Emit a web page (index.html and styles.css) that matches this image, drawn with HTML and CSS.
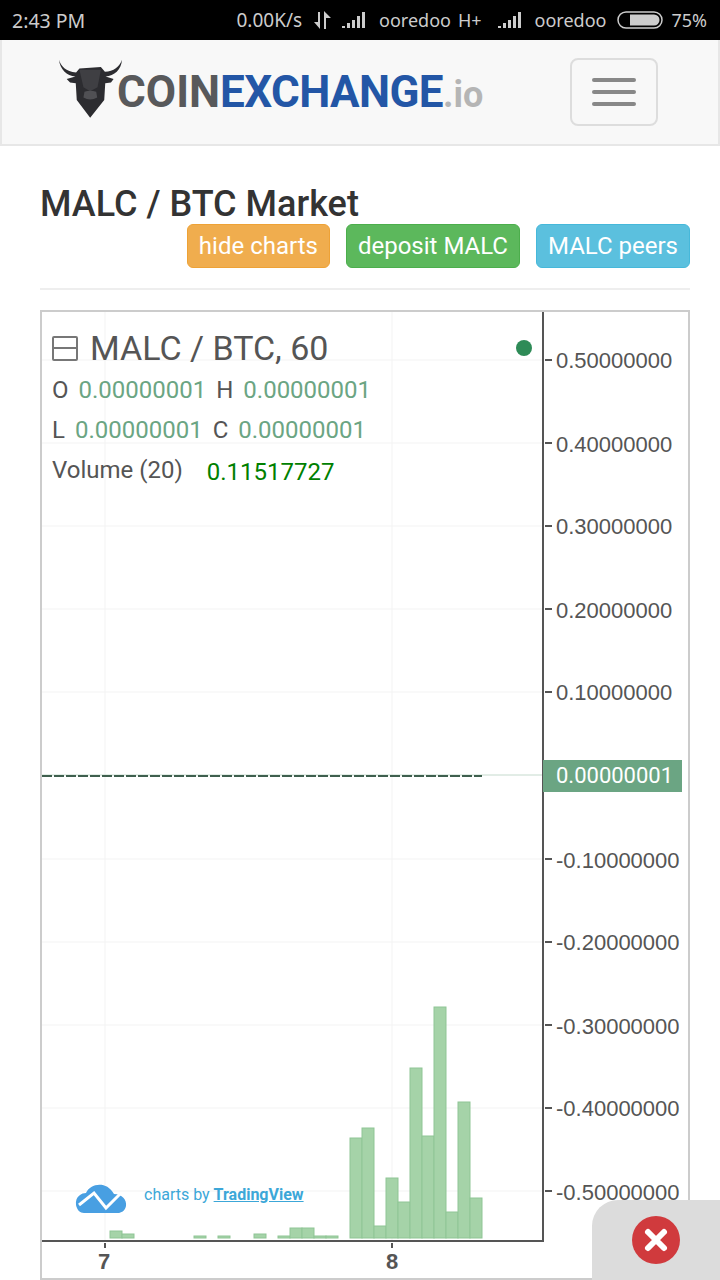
FILE: index.html
```html
<!DOCTYPE html>
<html lang="en">
<head>
    <meta charset="UTF-8">
    <title>MALC / BTC Market</title>
    <link rel="stylesheet" href="styles.css">
</head>
<body>

<div class="statusbar">
    <span class="clock">2:43 PM</span>
    <div class="status-right">
        <span class="speed">0.00K/s</span>
        <svg class="arrows" width="18" height="18" viewBox="0 0 18 18">
            <path d="M5 1H7V18L1 11H5ZM11 18V0L18 7H13V18Z" fill="#ccc"/>
        </svg>
        <svg class="signal" width="26" height="18" viewBox="0 0 26 18">
            <path d="M1 15h3v2H1zM6 12h3v5H6zM11 9h3v8h-3zM16 5h3v12h-3zM21 1h3v16h-3z" fill="#ccc"/>
        </svg>
        <span class="carrier">ooredoo</span>
        <span class="net">H+</span>
        <svg class="signal" width="26" height="18" viewBox="0 0 26 18">
            <path d="M1 15h3v2H1zM6 12h3v5H6zM11 9h3v8h-3zM16 5h3v12h-3zM21 1h3v16h-3z" fill="#ccc"/>
        </svg>
        <span class="carrier">ooredoo</span>
        <svg class="battery" width="46" height="18" viewBox="0 0 46 18">
            <rect x="1" y="1" width="44" height="16" rx="8" fill="none" stroke="#ccc" stroke-width="1.500"/>
            <path d="M13 3.500H37A5.500 5.500 0 0 1 37 14.500H13Z" fill="#ccc"/>
        </svg>
        <span class="percent">75%</span>
    </div>
</div>

<nav class="navbar">
    <a class="brand">
        <svg class="bull" width="66" height="61" viewBox="55 25 195 182">
            <path d="M57 30C62 48 78 66 108 68L118 56L182 52L194 66C220 66 238 50 245 30C243 60 222 78 196 80L220 88L212 98L195 100L192 150L150 203L110 150L107 100L90 98L80 88L106 80C80 78 60 58 57 30Z" fill="#2c2c30"/>
            <path d="M118 60H182L172 112L150 124L130 112Z" fill="#3f3f43"/>
            <path d="M133 126Q150 120 168 126L171 143Q150 154 130 143Z" fill="#505054"/>
        </svg>
        <span class="wordmark"><span class="coin">COIN</span><span class="exchange">EXCHANGE</span><span class="tld">.io</span></span>
    </a>
    <button class="toggle">
        <span class="toggle-bar"></span>
        <span class="toggle-bar"></span>
        <span class="toggle-bar"></span>
    </button>
</nav>

<main class="content">
    <h1>MALC / BTC Market</h1>
    <div class="actions">
        <a class="btn btn-warning">hide charts</a>
        <a class="btn btn-success">deposit MALC</a>
        <a class="btn btn-info">MALC peers</a>
    </div>
    <hr class="rule">

    <div class="chart">
        <svg class="plot" width="646" height="968" viewBox="42 312 646 968">
            <g class="grid">
                <path d="M42 360H543M42 443H543M42 526H543M42 609H543M42 692H543M42 859H543M42 942H543M42 1025H543M42 1108H543M42 1191H543M105 312V1240M392 312V1240"/>
            </g>
            <g class="bars">
                <rect x="110" y="1231" width="12" height="7"/>
                <rect x="122" y="1234" width="12" height="4"/>
                <rect x="194" y="1236" width="12" height="2"/>
                <rect x="218" y="1236" width="12" height="2"/>
                <rect x="254" y="1234" width="12" height="4"/>
                <rect x="278" y="1236" width="12" height="2"/>
                <rect x="290" y="1228" width="12" height="10"/>
                <rect x="302" y="1228" width="12" height="10"/>
                <rect x="314" y="1236" width="12" height="2"/>
                <rect x="326" y="1236" width="12" height="2"/>
                <rect x="350" y="1138" width="12" height="100"/>
                <rect x="362" y="1128" width="12" height="110"/>
                <rect x="374" y="1226" width="12" height="12"/>
                <rect x="386" y="1178" width="12" height="60"/>
                <rect x="398" y="1202" width="12" height="36"/>
                <rect x="410" y="1068" width="12" height="170"/>
                <rect x="422" y="1136" width="12" height="102"/>
                <rect x="434" y="1007" width="12" height="231"/>
                <rect x="446" y="1212" width="12" height="26"/>
                <rect x="458" y="1102" width="12" height="136"/>
                <rect x="470" y="1198" width="12" height="40"/>
            </g>
            <path class="last-line" d="M42 775H543"/>
            <path class="price-line" d="M42 776H482"/>
            <path class="axis" d="M543 312V1241H42"/>
            <path class="ticks" d="M545 360H552M545 443H552M545 526H552M545 609H552M545 692H552M545 859H552M545 942H552M545 1025H552M545 1108H552M545 1191H552M105 1243V1248M392 1243V1248"/>
            <g class="y-labels">
                <text x="556" y="368">0.50000000</text>
                <text x="556" y="452">0.40000000</text>
                <text x="556" y="534">0.30000000</text>
                <text x="556" y="618">0.20000000</text>
                <text x="556" y="700">0.10000000</text>
                <text x="556" y="868">-0.10000000</text>
                <text x="556" y="950">-0.20000000</text>
                <text x="556" y="1034">-0.30000000</text>
                <text x="556" y="1116">-0.40000000</text>
                <text x="556" y="1200">-0.50000000</text>
            </g>
            <g class="x-labels">
                <text x="104" y="1269">7</text>
                <text x="392" y="1269">8</text>
            </g>
            <circle cx="524" cy="348" r="8" fill="#2e8b57"/>
            <path d="M76 1205C75 1196 82 1193 86 1193C90 1184 106 1180 114 1194C122 1194 127 1200 126 1206C125 1211 121 1213 118 1213H84C80 1213 77 1210 76 1205Z" fill="#489fe2"/>
            <path d="M79 1205L94 1193L106 1208L120 1194" fill="none" stroke="#fff" stroke-width="3"/>
        </svg>

        <div class="legend">
            <div class="legend-title">
                <span class="collapse"></span>
                <span>MALC / BTC, 60</span>
            </div>
            <div class="legend-row">
                <span class="key">O</span><span class="val">0.00000001</span>
                <span class="key">H</span><span class="val">0.00000001</span>
            </div>
            <div class="legend-row">
                <span class="key">L</span><span class="val">0.00000001</span>
                <span class="key">C</span><span class="val">0.00000001</span>
            </div>
            <div class="legend-row">
                <span class="key">Volume (20)</span><span class="vol">0.11517727</span>
            </div>
        </div>

        <div class="price-tag">0.00000001</div>
        <div class="credit">charts by <a class="credit-link">TradingView</a></div>
    </div>
</main>

<div class="ad-close">
    <svg width="48" height="48" viewBox="0 0 48 48">
        <circle cx="24" cy="24" r="24" fill="#d03a3d"/>
        <path d="M16 16L32 32M32 16L16 32" stroke="#fff" stroke-width="6" stroke-linecap="round"/>
    </svg>
</div>

</body>
</html>
```

FILE: styles.css
```css
html, body {
    margin: 0;
    height: 1280px;
    overflow: hidden;
}
body {
    position: relative;
    font-family: Roboto, sans-serif;
    background-color: #fff;
    color: #333;
}
.statusbar {
    height: 40px;
    background-color: #000;
    color: #ccc;
    font-family: "Noto Sans", sans-serif;
    font-size: 18px;
    display: flex;
    align-items: center;
    justify-content: space-between;
    padding: 0 13px 0 12px;
    box-sizing: border-box;
}
.clock {
    font-size: 19.500px;
}
.status-right {
    display: flex;
    align-items: center;
}
.speed {
    font-size: 19px;
    margin-right: 11px;
}
.arrows {
    margin-right: 10px;
}
.signal {
    margin-right: 12px;
}
.carrier {
    margin-right: 7px;
}
.net {
    margin-right: 15px;
}
.battery {
    margin: 0 8px 0 4px;
}
.navbar {
    height: 106px;
    box-sizing: border-box;
    background-color: #f8f8f8;
    border: 2px solid #e7e7e7;
    border-top: 0;
    display: flex;
    align-items: flex-start;
    justify-content: space-between;
    padding: 18px 60px 0 56px;
}
.brand {
    display: flex;
    align-items: flex-start;
}
.wordmark {
    font-family: "Liberation Sans Narrow", Roboto, sans-serif;
    font-weight: bold;
    font-size: 44px;
    line-height: 50px;
    margin-top: 9px;
    margin-left: -7px;
    white-space: nowrap;
}
.coin {
    color: #58595b;
}
.exchange {
    color: #2356a6;
    letter-spacing: -0.600px;
}
.tld {
    color: #b5b5b5;
    font-size: 36px;
}
.toggle {
    width: 88px;
    height: 68px;
    background: transparent;
    border: 2px solid #ddd;
    border-radius: 8px;
    padding: 0;
    display: flex;
    flex-direction: column;
    align-items: center;
    justify-content: center;
    gap: 8px;
}
.toggle-bar {
    display: block;
    width: 44px;
    height: 4px;
    border-radius: 2px;
    background-color: #888;
}
.content {
    padding: 0 30px 0 40px;
}
h1 {
    margin: 38px 0 0;
    font-size: 36px;
    line-height: 40px;
    font-weight: 500;
    color: #333;
}
.actions {
    display: flex;
    justify-content: flex-end;
    gap: 16px;
}
.btn {
    box-sizing: border-box;
    height: 44px;
    line-height: 42px;
    padding: 0 11px;
    font-size: 24px;
    color: #fff;
    border: 1px solid;
    border-radius: 6px;
}
.btn-warning {
    background-color: #f0ad4e;
    border-color: #eea236;
}
.btn-success {
    background-color: #5cb85c;
    border-color: #4cae4c;
}
.btn-info {
    background-color: #5bc0de;
    border-color: #46b8da;
}
.rule {
    margin: 20px 0 20px;
    border: 0;
    border-top: 2px solid #eee;
}
.chart {
    position: relative;
    box-sizing: border-box;
    height: 970px;
    border: 2px solid #ccc;
}
.plot {
    display: block;
}
.grid path {
    fill: none;
    stroke: #f3f3f3;
    stroke-width: 1;
}
.bars rect {
    fill: #a5d3a8;
    stroke: #8fc595;
    stroke-width: 1;
}
.last-line {
    stroke: #c5dacd;
    stroke-width: 1;
    fill: none;
}
.price-line {
    stroke: #3f5f4e;
    stroke-width: 2;
    stroke-dasharray: 10 2;
    fill: none;
}
.axis {
    fill: none;
    stroke: #555;
    stroke-width: 2;
}
.ticks {
    fill: none;
    stroke: #555;
    stroke-width: 2;
}
.y-labels text {
    font-family: "Liberation Sans", Arial, sans-serif;
    font-size: 22px;
    fill: #555;
}
.x-labels text {
    font-family: "Liberation Sans", Arial, sans-serif;
    font-size: 22px;
    font-weight: bold;
    fill: #555;
    text-anchor: middle;
}
.legend {
    position: absolute;
    left: 10px;
    top: 16px;
    color: #555;
}
.legend-title {
    display: flex;
    align-items: center;
    gap: 12px;
    height: 40px;
    margin-bottom: 2px;
    font-size: 34px;
}
.collapse {
    box-sizing: border-box;
    position: relative;
    width: 26px;
    height: 25px;
    border: 2px solid #777;
    border-radius: 2px;
}
.collapse::after {
    content: "";
    position: absolute;
    left: 0;
    right: 0;
    top: 9px;
    height: 2px;
    background-color: #777;
}
.legend-row {
    height: 40px;
    line-height: 40px;
    font-size: 24px;
    white-space: nowrap;
}
.key {
    margin-right: 10px;
}
.val {
    color: #6ba583;
    margin-right: 4px;
}
.legend-row .vol {
    color: #008000;
    margin-left: 14px;
    position: relative;
    top: 2px;
}
.price-tag {
    position: absolute;
    left: 501px;
    top: 448px;
    width: 139px;
    height: 32px;
    line-height: 32px;
    box-sizing: border-box;
    padding-left: 13px;
    background-color: #6ba583;
    color: #fff;
    font-size: 22px;
}
.credit {
    position: absolute;
    left: 102px;
    top: 873px;
    font-size: 16px;
    color: #3ca7d8;
}
.credit-link {
    font-weight: bold;
    text-decoration: underline;
}
.ad-close {
    position: absolute;
    right: 0;
    bottom: 0;
    width: 128px;
    height: 80px;
    background-color: #dcdcdc;
    border-top-left-radius: 26px;
    display: flex;
    align-items: center;
    padding-left: 40px;
    box-sizing: border-box;
}
```
